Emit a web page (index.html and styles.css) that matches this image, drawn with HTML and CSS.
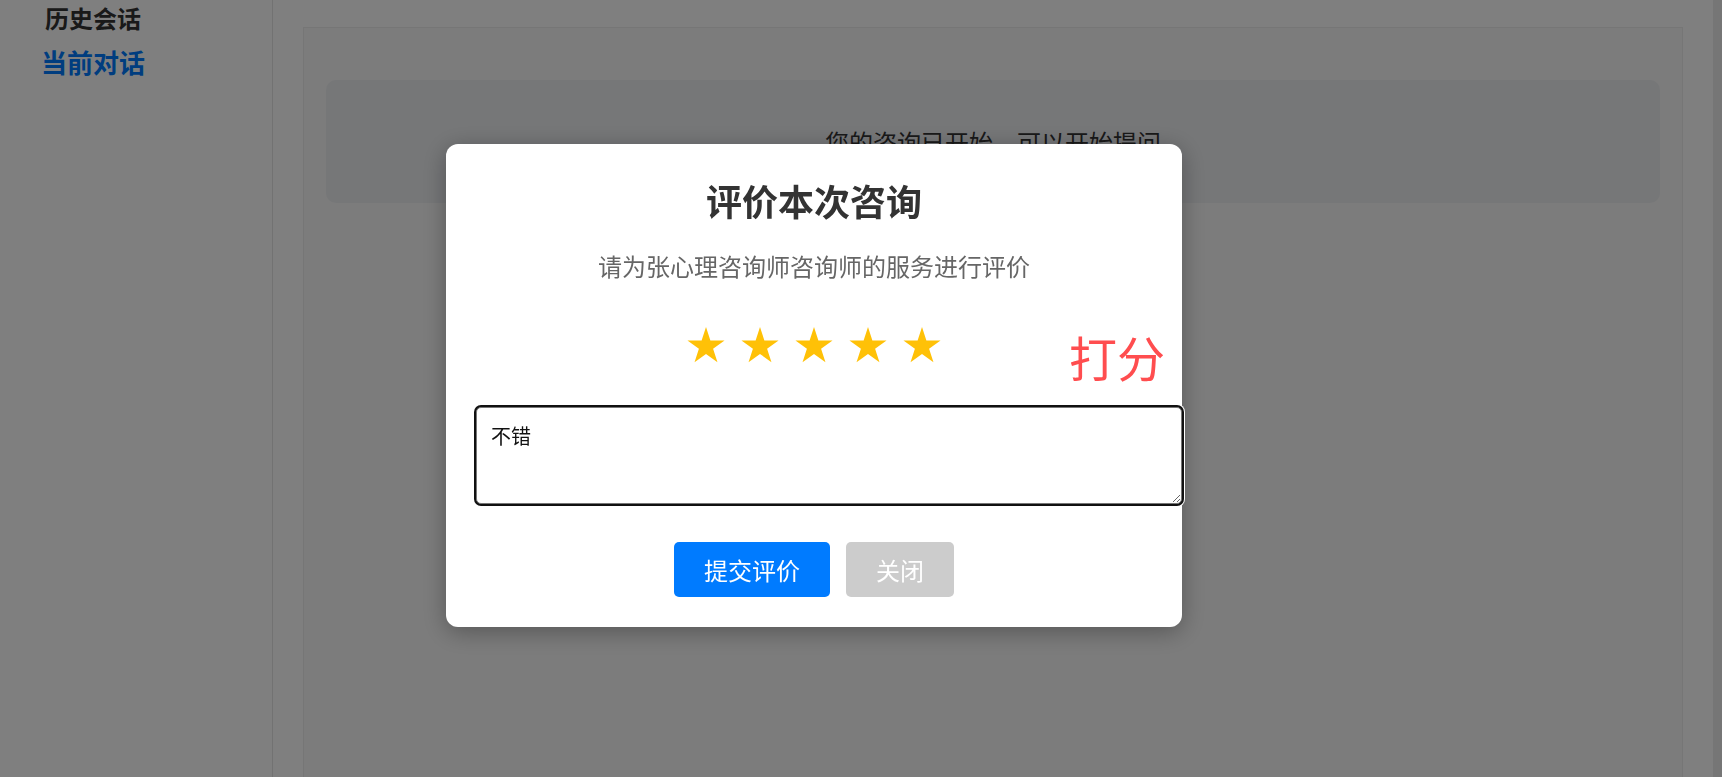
FILE: index.html
```html
<!DOCTYPE html>
<html lang="zh-CN">
<head>
<meta charset="utf-8">
<title>评价本次咨询</title>
<link rel="stylesheet" href="styles.css">
</head>
<body>
<div class="layout">
  <aside class="sidebar">
    <nav class="nav">
      <div class="nav-item">历史会话</div>
      <div class="nav-item active">当前对话</div>
    </nav>
  </aside>
  <main class="main">
    <section class="chat-panel">
      <div class="system-msg">您的咨询已开始，可以开始提问</div>
    </section>
  </main>
  <div class="scroll-strip"></div>
</div>

<div class="overlay">
  <div class="modal">
    <h2 class="modal-title">评价本次咨询</h2>
    <p class="modal-sub">请为张心理咨询师咨询师的服务进行评价</p>
    <div class="stars">
      <svg class="star" viewBox="0 0 38 36" width="38" height="36"><polygon points="19,0 23.38,13.47 37.55,13.47 26.09,21.8 30.46,35.28 19,26.95 7.54,35.28 11.91,21.8 0.45,13.47 14.62,13.47"/></svg>
      <svg class="star" viewBox="0 0 38 36" width="38" height="36"><polygon points="19,0 23.38,13.47 37.55,13.47 26.09,21.8 30.46,35.28 19,26.95 7.54,35.28 11.91,21.8 0.45,13.47 14.62,13.47"/></svg>
      <svg class="star" viewBox="0 0 38 36" width="38" height="36"><polygon points="19,0 23.38,13.47 37.55,13.47 26.09,21.8 30.46,35.28 19,26.95 7.54,35.28 11.91,21.8 0.45,13.47 14.62,13.47"/></svg>
      <svg class="star" viewBox="0 0 38 36" width="38" height="36"><polygon points="19,0 23.38,13.47 37.55,13.47 26.09,21.8 30.46,35.28 19,26.95 7.54,35.28 11.91,21.8 0.45,13.47 14.62,13.47"/></svg>
      <svg class="star" viewBox="0 0 38 36" width="38" height="36"><polygon points="19,0 23.38,13.47 37.55,13.47 26.09,21.8 30.46,35.28 19,26.95 7.54,35.28 11.91,21.8 0.45,13.47 14.62,13.47"/></svg>
    </div>
    <span class="note">打分</span>
    <textarea class="comment">不错</textarea>
    <div class="actions">
      <button class="btn btn-primary">提交评价</button>
      <button class="btn btn-muted">关闭</button>
    </div>
  </div>
</div>
</body>
</html>
```

FILE: styles.css
```css
* { box-sizing: border-box; }
html, body {
  margin: 0;
  padding: 0;
  height: 100%;
  overflow: hidden;
}
body {
  font-family: "Noto Sans CJK SC", "Noto Sans", sans-serif;
  color: #333;
  background: #fff;
}
.layout {
  display: flex;
  height: 100vh;
}
.sidebar {
  width: 273px;
  flex: none;
  background: #fff;
  border-right: 1px solid #e4e4e4;
}
.nav {
  width: 186px;
  text-align: center;
}
.nav-item {
  font-size: 24px;
  font-weight: bold;
  line-height: 36px;
  color: #333;
}
.nav-item.active {
  font-size: 26px;
  line-height: 44px;
  margin-top: 4px;
  color: #007bff;
}
.main {
  flex: 1;
  padding: 27px 30px 0 30px;
  background: #fff;
}
.chat-panel {
  height: 100%;
  background: #f8f8f8;
  border: 1px solid #ececec;
  border-bottom: none;
  padding: 52px 22px;
}
.system-msg {
  background: #eceef1;
  border-radius: 10px;
  padding: 44px 20px;
  font-size: 24px;
  line-height: 35px;
  text-align: center;
  color: #333;
}
.scroll-strip {
  width: 9px;
  flex: none;
  background: #ececec;
}
.overlay {
  position: fixed;
  inset: 0;
  background: rgba(0, 0, 0, 0.5);
  display: flex;
  align-items: center;
  justify-content: center;
}
.modal {
  position: relative;
  width: 736px;
  margin-right: 94px;
  margin-bottom: 6px;
  background: #fff;
  border-radius: 12px;
  padding: 30px;
  text-align: center;
  box-shadow: 0 5px 25px rgba(0, 0, 0, 0.3);
}
.modal-title {
  margin: 0 0 23px;
  font-size: 36px;
  line-height: 52px;
  font-weight: bold;
  color: #333;
}
.modal-sub {
  margin: 0;
  font-size: 24px;
  line-height: 34px;
  color: #666;
}
.stars {
  display: flex;
  justify-content: center;
  gap: 16px;
  margin-top: 44px;
  height: 36px;
}
.star {
  display: block;
  fill: #ffc107;
}
.note {
  position: absolute;
  left: 623px;
  top: 188px;
  font-size: 48px;
  line-height: 48px;
  color: #ff4d4f;
  white-space: nowrap;
}
.comment {
  display: block;
  box-sizing: content-box;
  width: 100%;
  height: 69px;
  margin-top: 44px;
  padding: 13px 14px;
  border: 1px solid #767676;
  border-radius: 5px;
  box-shadow: 0 0 0 2px #111, 0 0 0 3px #fff;
  font-family: "Noto Sans CJK SC", "Noto Sans", sans-serif;
  font-size: 20px;
  line-height: 30px;
  color: #111;
  text-align: left;
  resize: vertical;
  outline: none;
}
.actions {
  display: flex;
  justify-content: center;
  gap: 16px;
  margin-top: 38px;
}
.btn {
  border: none;
  border-radius: 5px;
  padding: 12px 30px;
  font-family: "Noto Sans CJK SC", "Noto Sans", sans-serif;
  font-size: 24px;
  line-height: 31px;
  color: #fff;
  cursor: pointer;
}
.btn-primary { background: #007bff; }
.btn-muted { background: #ccc; }
```
